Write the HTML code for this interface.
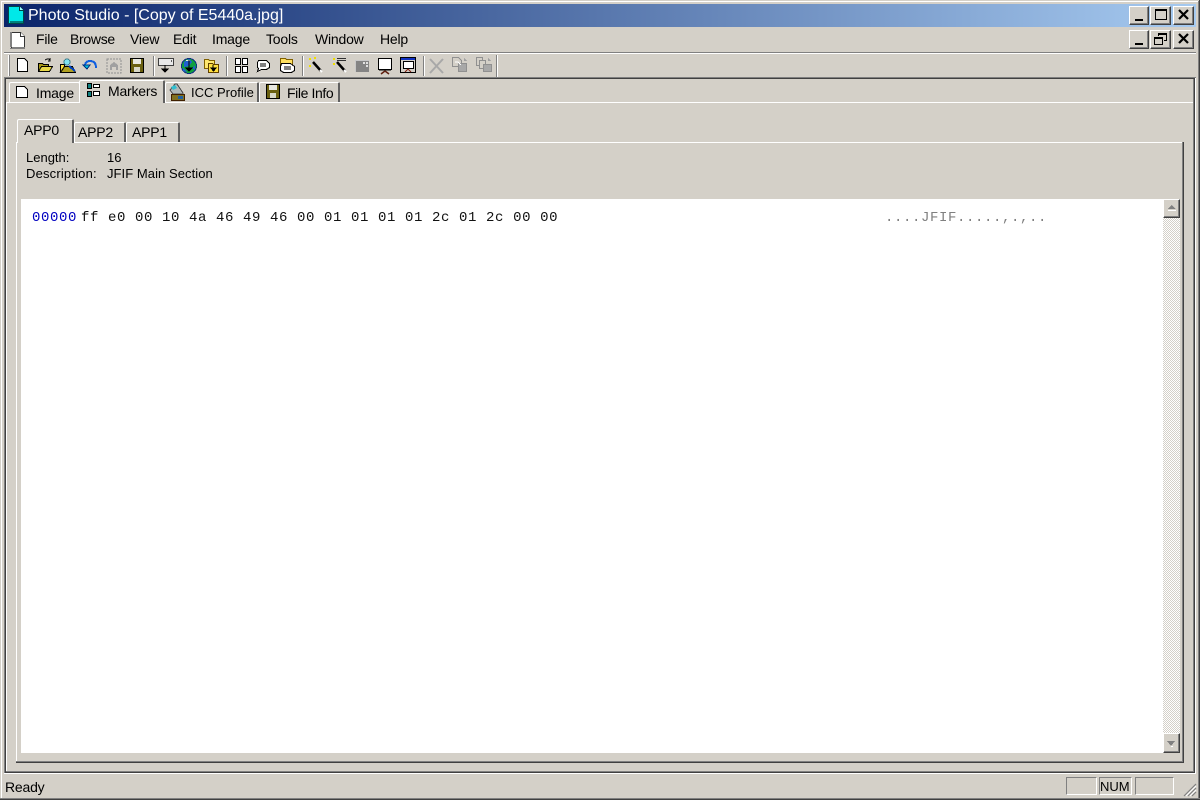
<!DOCTYPE html>
<html><head><meta charset="utf-8"><title>Photo Studio</title>
<style>
html,body{margin:0;padding:0;background:#d4d0c8;}
#r{position:relative;width:1200px;height:800px;overflow:hidden;background:#d4d0c8;font:14px "Liberation Sans",sans-serif;color:#000;}
#r div,#r span.t{position:absolute;}
.t{white-space:nowrap;line-height:16px;letter-spacing:-.2px;}
.l{position:absolute;}
.btn{background:#d4d0c8;box-sizing:border-box;border:1px solid;border-color:#fff #404040 #404040 #fff;box-shadow:inset -1px -1px 0 #808080;}
.tab{box-sizing:border-box;background:#d4d0c8;border-top:1px solid #fff;border-left:1px solid #fff;border-right:2px solid #606060;border-radius:2px 2px 0 0;}
.m{font-family:"Liberation Mono",monospace;font-size:14px;letter-spacing:.6px;line-height:16px;white-space:pre;}
svg{position:absolute;left:0;top:0;}
</style></head><body><div id="r">
<div class="l" style="left:0;top:0;width:1200px;height:1px;background:#d4d0c8"></div>
<div class="l" style="left:1px;top:1px;width:1198px;height:1px;background:#fff"></div>
<div class="l" style="left:1px;top:1px;width:1px;height:798px;background:#fff"></div>
<div class="l" style="left:1198px;top:1px;width:1px;height:798px;background:#808080"></div>
<div class="l" style="left:1199px;top:0;width:1px;height:800px;background:#404040"></div>
<div class="l" style="left:0;top:798px;width:1200px;height:1px;background:#808080"></div>
<div class="l" style="left:0;top:799px;width:1200px;height:1px;background:#404040"></div>

<div class="l" style="left:4px;top:4px;width:1192px;height:23px;background:linear-gradient(90deg,#0a246a 0,#a6caf0 100%)"></div>
<span class="t" style="left:28px;top:8px;color:#fff;font-size:16px;letter-spacing:0">Photo Studio - [Copy of E5440a.jpg]</span>

<div class="btn" style="left:1129px;top:6px;width:20px;height:19px"></div>
<div class="btn" style="left:1150px;top:6px;width:21px;height:19px"></div>
<div class="btn" style="left:1173px;top:6px;width:21px;height:19px"></div>
<div class="btn" style="left:1129px;top:30px;width:20px;height:19px"></div>
<div class="btn" style="left:1150px;top:30px;width:21px;height:19px"></div>
<div class="btn" style="left:1173px;top:30px;width:21px;height:19px"></div>

<span class="t" style="left:36px;top:31px">File</span>
<span class="t" style="left:70px;top:31px;letter-spacing:-.3px">Browse</span>
<span class="t" style="left:130px;top:31px">View</span>
<span class="t" style="left:173px;top:31px">Edit</span>
<span class="t" style="left:212px;top:31px">Image</span>
<span class="t" style="left:266px;top:31px">Tools</span>
<span class="t" style="left:315px;top:31px">Window</span>
<span class="t" style="left:380px;top:31px">Help</span>

<div class="l" style="left:4px;top:52px;width:1192px;height:1px;background:#808080"></div>
<div class="l" style="left:4px;top:53px;width:1192px;height:1px;background:#fff"></div>
<div class="l" style="left:8px;top:55px;width:1px;height:21px;background:#fff"></div>
<div class="l" style="left:9px;top:55px;width:1px;height:21px;background:#808080"></div>
<div class="l" style="left:153px;top:56px;width:1px;height:20px;background:#808080"></div><div class="l" style="left:154px;top:56px;width:1px;height:20px;background:#fff"></div>
<div class="l" style="left:226px;top:56px;width:1px;height:20px;background:#808080"></div><div class="l" style="left:227px;top:56px;width:1px;height:20px;background:#fff"></div>
<div class="l" style="left:302px;top:56px;width:1px;height:20px;background:#808080"></div><div class="l" style="left:303px;top:56px;width:1px;height:20px;background:#fff"></div>
<div class="l" style="left:423px;top:56px;width:1px;height:20px;background:#808080"></div><div class="l" style="left:424px;top:56px;width:1px;height:20px;background:#fff"></div>
<div class="l" style="left:496px;top:55px;width:1px;height:22px;background:#808080"></div><div class="l" style="left:497px;top:55px;width:1px;height:22px;background:#fff"></div>

<!-- outer frame -->
<div class="l" style="left:4px;top:77px;width:1192px;height:1px;background:#808080"></div>
<div class="l" style="left:4px;top:78px;width:1192px;height:1px;background:#404040"></div>
<div class="l" style="left:4px;top:77px;width:1px;height:696px;background:#808080"></div>
<div class="l" style="left:5px;top:78px;width:1px;height:695px;background:#404040"></div>
<div class="l" style="left:1195px;top:78px;width:1px;height:696px;background:#fff"></div>
<div class="l" style="left:4px;top:773px;width:1192px;height:1px;background:#fff"></div>
<div class="l" style="left:6px;top:772px;width:1189px;height:1px;background:#404040"></div>
<div class="l" style="left:6px;top:771px;width:1188px;height:1px;background:#808080"></div>
<div class="l" style="left:1194px;top:79px;width:1px;height:693px;background:#404040"></div>
<div class="l" style="left:1193px;top:79px;width:1px;height:693px;background:#808080"></div>

<!-- outer tab page -->
<div class="l" style="left:6px;top:102px;width:1187px;height:1px;background:#fff"></div>
<div class="l" style="left:6px;top:102px;width:1px;height:669px;background:#fff"></div>

<div class="tab" style="left:9px;top:82px;width:71px;height:21px;border-right:1px solid #fff;border-bottom:1px solid #fff"></div>
<div class="tab" style="left:79px;top:80px;width:86px;height:23px;background:#d4d0c8"></div>
<div class="tab" style="left:165px;top:82px;width:94px;height:20px"></div>
<div class="tab" style="left:259px;top:82px;width:81px;height:20px"></div>
<span class="t" style="left:36px;top:85px">Image</span>
<span class="t" style="left:108px;top:83px">Markers</span>
<span class="t" style="left:191px;top:85px;font-size:13px;letter-spacing:0">ICC Profile</span>
<span class="t" style="left:287px;top:85px;letter-spacing:-.4px">File Info</span>

<!-- inner page -->
<div class="l" style="left:16px;top:142px;width:1168px;height:1px;background:#fff"></div>
<div class="l" style="left:16px;top:142px;width:1px;height:620px;background:#fff"></div>
<div class="l" style="left:1182px;top:142px;width:1px;height:620px;background:#808080"></div>
<div class="l" style="left:1183px;top:142px;width:1px;height:621px;background:#404040"></div>
<div class="l" style="left:16px;top:761px;width:1167px;height:1px;background:#808080"></div>
<div class="l" style="left:16px;top:762px;width:1168px;height:1px;background:#404040"></div>

<div class="tab" style="left:17px;top:119px;width:57px;height:24px"></div>
<div class="tab" style="left:74px;top:122px;width:52px;height:20px"></div>
<div class="tab" style="left:126px;top:122px;width:54px;height:20px"></div>
<span class="t" style="left:24px;top:122px">APP0</span>
<span class="t" style="left:78px;top:124px">APP2</span>
<span class="t" style="left:132px;top:124px">APP1</span>

<span class="t" style="left:26px;top:150px;font-size:13px;letter-spacing:0">Length:</span>
<span class="t" style="left:107px;top:150px;font-size:13px;letter-spacing:0">16</span>
<span class="t" style="left:26px;top:166px;font-size:13px;letter-spacing:.18px">Description:</span>
<span class="t" style="left:107px;top:166px;font-size:13px;letter-spacing:.06px">JFIF Main Section</span>

<!-- hex view -->
<div class="l" style="left:21px;top:199px;width:1142px;height:554px;background:#fff"></div>
<div class="m" style="position:absolute;left:32px;top:210px;color:#0000c0">00000</div>
<div class="m" style="position:absolute;left:81px;top:210px;color:#111">ff e0 00 10 4a 46 49 46 00 01 01 01 01 2c 01 2c 00 00</div>
<div class="m" style="position:absolute;left:885px;top:210px;color:#808080">....JFIF.....,.,..</div>

<!-- scrollbar -->
<div class="l" style="left:1163px;top:199px;width:17px;height:554px;background:repeating-conic-gradient(#fff 0 25%,#d4d0c8 0 50%) 0 0/2px 2px"></div>
<div class="btn" style="left:1163px;top:199px;width:17px;height:19px"></div>
<div class="btn" style="left:1163px;top:733px;width:17px;height:20px"></div>

<!-- status bar -->
<span class="t" style="left:5px;top:779px">Ready</span>
<div class="l" style="left:1066px;top:777px;width:31px;height:18px;box-sizing:border-box;border:1px solid;border-color:#808080 #fff #fff #808080"></div>
<div class="l" style="left:1099px;top:777px;width:33px;height:18px;box-sizing:border-box;border:1px solid;border-color:#808080 #fff #fff #808080"></div>
<div class="l" style="left:1135px;top:777px;width:39px;height:18px;box-sizing:border-box;border:1px solid;border-color:#808080 #fff #fff #808080"></div>
<span class="t" style="left:1100px;top:779px;font-size:13px;letter-spacing:0">NUM</span>

<svg width="1200" height="800" viewBox="0 0 1200 800" shape-rendering="crispEdges">
<!-- app icon -->
<path d="M8.500 6.500h11l4 4v13h-15z" fill="#00e8e8" stroke="#004848"/>
<path d="M19.500 6.500v4h4" fill="#a0ffff" stroke="#004848"/>
<path d="M10 21h13v2h-13z" fill="#008080"/>
<!-- menu doc icon -->
<path d="M11.500 32.500h9l4 4v11h-13z" fill="#fff" stroke="#333"/>
<path d="M10 32v16h2v-16zM10 47h15v2h-15z" fill="#808080"/>
<path d="M20.500 32.500v4h4" fill="#fff" stroke="#333"/>

<!-- window buttons -->
<g fill="#000">
<rect x="1135" y="19" width="8" height="2"/>
<path d="M1155 9h12v11h-12zM1156 11v8h10v-8z" fill-rule="evenodd"/>
<rect x="1135" y="43" width="8" height="2"/>
<path d="M1158 33h9v8h-3v-1h2v-5h-7v1h-1zM1154 37h9v8h-9zM1155 39v5h7v-5z" fill-rule="evenodd"/>
</g>
<g stroke="#000" stroke-width="2.200" fill="none" shape-rendering="auto">
<path d="M1179 10l9 9M1188 10l-9 9M1179 34l9 9M1188 34l-9 9"/>
</g>

<!-- toolbar: new -->
<path d="M17.500 58.500h7l3 3v10h-10z" fill="#fff" stroke="#000"/>
<!-- open -->
<path d="M38.500 63.500h4l1 1h5v6h-10z" fill="#a89818" stroke="#000"/>
<path d="M38.500 71.500l3-5h11l-3 5z" fill="#e8d848" stroke="#000"/>
<path d="M45 60q3-2 5 0M50 58v3h-2" fill="none" stroke="#000"/>
<!-- open user -->
<path d="M60.500 64.500h4v7h-4z" fill="#ffe040" stroke="#000"/>
<path d="M60.500 72.500l4-6h8l3 6z" fill="#b0a020" stroke="#000"/>
<rect x="64" y="59" width="6" height="6" rx="3" fill="#80e0f0" stroke="#408090"/>
<path d="M69 66l6 5" stroke="#0040c0" stroke-width="2" fill="none"/>
<!-- undo -->
<path d="M85 66q0-5 5-5q6 0 6 7" fill="none" stroke="#1060e0" stroke-width="2"/>
<path d="M83 65h7l-3 4z" fill="#00c0e0" stroke="#003080"/>
<!-- camera disabled -->
<path d="M107 59h14v14h-14z" fill="none" stroke="#909090" stroke-dasharray="2 1"/>
<path d="M110 70v-5l4-3 4 3v5h-2v-3h-4v3z" fill="#a0a0a0"/>
<!-- save -->
<path d="M130.500 58.500h13v14h-13z" fill="#6a6010" stroke="#000"/>
<rect x="133" y="59" width="8" height="5" fill="#e8e8e0"/>
<rect x="134" y="67" width="6" height="5" fill="#d8d8c8"/>
<!-- download monitor -->
<rect x="158.500" y="58.500" width="15" height="7" fill="#e8e8e8" stroke="#404040"/>
<path d="M171 60h1v2h-1z" fill="#606060"/>
<path d="M165 65v6M162 69h6l-3 3z" stroke="#000" fill="#000"/>
<!-- globe -->
<circle cx="189" cy="66" r="7.500" fill="#10a040" stroke="#103080"/>
<path d="M184 62l5-3 3 3-3 4-5 1zM192 68l3-3v5zM183 68l4 4-4-1z" fill="#2060d0"/>
<path d="M186 60h4v1h-4z" fill="#e0f0e0"/>
<path d="M189 60v10M186 68h6l-3 3z" stroke="#000" fill="#000"/>
<!-- folders -->
<path d="M204.500 59.500h4l1 1h5v8h-10z" fill="#ffe870" stroke="#806000"/>
<path d="M208.500 63.500h4l1 1h5v8h-10z" fill="#ffe040" stroke="#604000"/>
<path d="M213 65v4M211 68h5l-2.500 3z" stroke="#000" fill="#000"/>
<!-- markers -->
<g fill="#fff" stroke="#000"><rect x="235.500" y="58.500" width="5" height="6"/><rect x="242.500" y="58.500" width="5" height="6"/><rect x="235.500" y="66.500" width="5" height="6"/><rect x="242.500" y="66.500" width="5" height="6"/></g>
<!-- bubble -->
<path d="M258.500 60.500h8l3 3v4l-3 2h-5l-4 2 1-3-1-1v-5z" fill="#fff" stroke="#000"/>
<path d="M260 64h6M260 66h6" stroke="#000"/>
<!-- folder bubble -->
<path d="M280.500 58.500h5l1 1h6v6h-12z" fill="#ffe060" stroke="#806000"/>
<path d="M281.500 63.500h9l4 3v4l-3 2h-8l-3-2v-4z" fill="#fff" stroke="#000"/>
<path d="M284 67h7M284 69h7" stroke="#000"/>
<!-- wands -->
<path d="M313 62l8 9" stroke="#000" stroke-width="2.500" fill="none" shape-rendering="auto"/>
<path d="M320 70l2 2" stroke="#fff" stroke-width="2" shape-rendering="auto"/>
<path d="M309 58h2v2h-2zM314 57h2v2h-2zM309 65h2v2h-2z" fill="#f0e000"/>
<path d="M337 62l8 9" stroke="#000" stroke-width="2.500" fill="none" shape-rendering="auto"/>
<path d="M344 70l2 2" stroke="#fff" stroke-width="2" shape-rendering="auto"/>
<path d="M333 58h2v2h-2zM333 63h2v2h-2z" fill="#f0e000"/>
<path d="M337 58h9v1h-9zM337 60h9v1h-9z" fill="#303030"/>
<!-- gray window -->
<rect x="355" y="60" width="14" height="12" fill="#848484"/>
<path d="M355 60h14v1h-14zM355 60h1v12h-1z" fill="#c8c8c8"/>
<path d="M363 62h2v2h-2zM366 62h2v2h-2zM366 65h2v2h-2z" fill="#e0e0e0"/>
<!-- monitor 1 -->
<rect x="378.500" y="58.500" width="13" height="11" fill="#fff" stroke="#000" stroke-width="1"/>
<path d="M379 70h12" stroke="#000"/>
<path d="M385 71l-4 3M385 71l4 3" stroke="#602010" fill="none" stroke-width="1.500" shape-rendering="auto"/>
<!-- monitor 2 -->
<rect x="400.500" y="57.500" width="15" height="15" fill="#d4d0c8" stroke="#000"/>
<rect x="401" y="58" width="14" height="2" fill="#1030c0"/>
<rect x="403.500" y="61.500" width="10" height="7" fill="#fff" stroke="#000"/>
<path d="M408 69l-3 3M408 69l3 3" stroke="#802010" fill="none" shape-rendering="auto"/>
<!-- X disabled -->
<path d="M430 59l13 14M443 59l-13 14" stroke="#a8a8a8" stroke-width="2" fill="none" shape-rendering="auto"/>
<!-- copy disabled -->
<path d="M452.500 57.500h6l3 3v6h-9z" fill="#d4d0c8" stroke="#909090"/>
<path d="M458.500 63.500h8v8h-8z" fill="#a8a8a8" stroke="#909090"/>
<path d="M455 62h3l3 3" fill="none" stroke="#fff"/>
<path d="M464 58l3 3h-3z" fill="#a0a0a0"/>
<path d="M476.500 57.500h6v8h-6z" fill="#d4d0c8" stroke="#909090"/>
<path d="M479.500 60.500h6v8h-6z" fill="#d4d0c8" stroke="#909090"/>
<path d="M483.500 64.500h8v7h-8z" fill="#a8a8a8" stroke="#909090"/>
<path d="M488 58l3 3h-3z" fill="#a0a0a0"/>

<!-- tab icons -->
<path d="M16.500 86.500h8l3 3v8h-11z" fill="#fff" stroke="#000"/>
<g stroke="#000">
<rect x="87.500" y="83.500" width="4" height="5" fill="#108080"/><rect x="87.500" y="91.500" width="4" height="5" fill="#108080"/>
<rect x="93.500" y="84.500" width="6" height="3" fill="#fff"/><rect x="93.500" y="91.500" width="6" height="4" fill="#fff"/>
</g>
<path d="M170 90l5-6h2l6 9v1h-10z" fill="#b0b8b8" stroke="#505050"/>
<path d="M171 87l4-2 2 3-4 2z" fill="#30c0d0"/>
<rect x="171.500" y="94.500" width="13" height="6" fill="#807020" stroke="#402000"/>
<path d="M178 96h5v3h-5z" fill="#2060a0"/>
<path d="M266.500 84.500h13v14h-13z" fill="#6a6010" stroke="#000"/>
<rect x="269" y="85" width="8" height="5" fill="#e8e8e0"/>
<rect x="270" y="93" width="6" height="5" fill="#d8d8c8"/>

<!-- scroll arrows -->
<path d="M1171.500 205l4 4h-8z" fill="#808080"/><rect x="1168" y="210" width="8" height="1" fill="#fff"/>
<path d="M1167 741h8l-4 5z" fill="#808080"/><rect x="1171" y="746" width="2" height="1" fill="#fff"/>

<!-- grip -->
<g stroke="#808080" shape-rendering="auto" stroke-width="1.200">
<path d="M1184 796l12-12M1188 796l8-8M1192 796l4-4"/>
</g>
<g stroke="#fff" shape-rendering="auto" stroke-width="1">
<path d="M1186 796l10-10M1190 796l6-6"/>
</g>
</svg>
</div></body></html>
